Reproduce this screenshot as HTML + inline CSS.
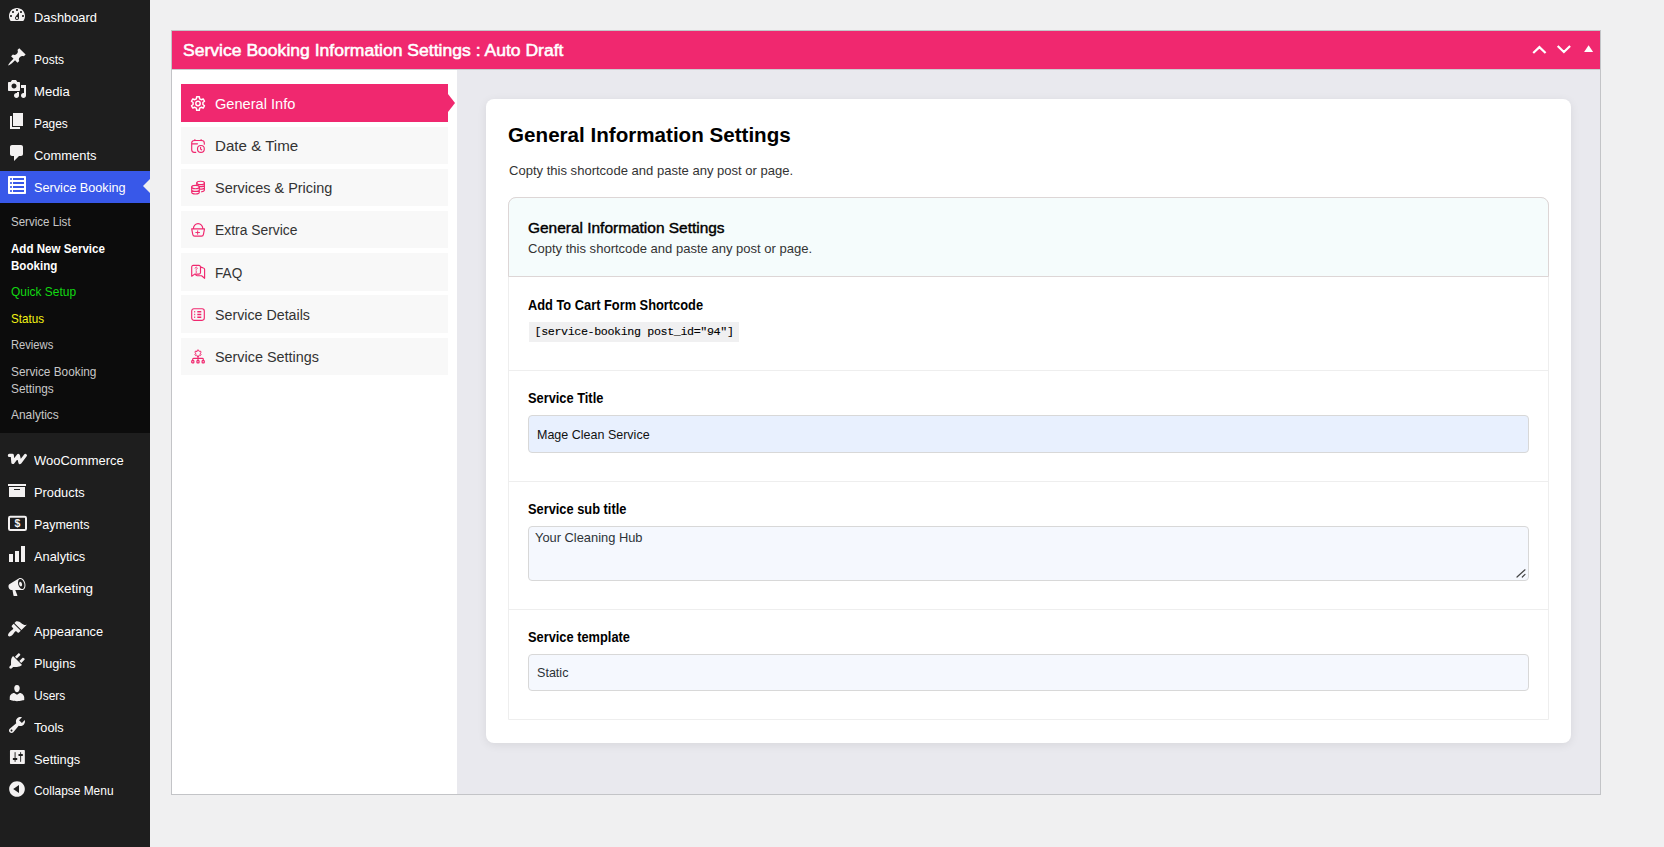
<!DOCTYPE html>
<html lang="en">
<head>
<meta charset="utf-8">
<title>Service Booking Information Settings</title>
<style>
*{box-sizing:border-box}
html,body{margin:0;padding:0}
body{width:1664px;height:847px;overflow:hidden;background:#f0f0f1;font-family:"Liberation Sans",sans-serif;color:#000;position:relative}
#menu{position:absolute;left:0;top:0;width:150px;height:847px;background:#1e1e1e}
.mi{position:absolute;left:0;width:150px;height:32px;color:#fff;font-size:13.1px;line-height:32px;white-space:nowrap}
.mi span{position:absolute;left:34px;top:0.6px;transform-origin:0 50%}
.mi svg{position:absolute;left:7px;top:4.3px;width:20px;height:20px;fill:#f3f1f1}
.mi svg.px{left:0;top:0;width:34px;height:32px}
.mi.cur{background:#3858e9}
.mi.cur svg{fill:#fff}
.mi.cur:after{content:"";position:absolute;right:0;top:8px;border:7.5px solid transparent;border-right-color:#f0f0f1;border-left-width:0}
#sub{position:absolute;left:0;top:203px;width:150px;height:230px;background:#0c0c0c}
#sub .si{margin-top:1px}
.si{transform-origin:0 50%;position:absolute;left:11.25px;font-size:12.2px;line-height:17px;color:#c8c8c8;white-space:nowrap}
.si.b{color:#fff;font-weight:bold}
#box{position:absolute;left:171px;top:30px;width:1430px;height:765px;border:1px solid #c3c4c7;background:#e9e9ee}
#hd{position:absolute;left:0;top:0;width:1428px;height:38px;background:#f0286f;box-shadow:0 1px 0 #c9cdd0;z-index:2}
#hd h2{transform:scaleX(1.039);transform-origin:0 50%;position:absolute;left:10.6px;top:.5px;margin:0;font-size:16.9px;line-height:38px;font-weight:normal;-webkit-text-stroke:.55px #fff;color:#fff;white-space:nowrap}
#hd svg{position:absolute;fill:#fff}
#left{position:absolute;left:0;top:38px;width:285px;height:725px;background:#fff}
.tab{position:absolute;left:9px;width:267px;height:37.5px;background:#f8f8f8;color:#333;font-size:15.5px;line-height:37.5px;white-space:nowrap}
.tab span{position:absolute;left:34px;top:.6px;transform-origin:0 50%}
.tab svg{position:absolute;left:9.9px;fill:none;stroke:#f0286f;stroke-width:1.15;stroke-linecap:round;stroke-linejoin:round;overflow:visible}
.tab.on{background:#f0286f;color:#fff}
.tab.on svg{stroke:#fff;stroke-width:1.45}
.tab.on:after{content:"";position:absolute;left:267px;top:9.5px;border:9.5px solid transparent;border-left:7px solid #f0286f;border-right-width:0}
#card{position:absolute;left:314px;top:68px;width:1085px;height:644px;background:#fff;border-radius:8px;box-shadow:0 2px 10px rgba(0,0,0,.08)}
#card h1{position:absolute;left:22.1px;top:20px;margin:0;font-size:20.6px;line-height:32px;font-weight:bold;white-space:nowrap}
.p{position:absolute;margin:0;font-size:13.1px;line-height:17px;color:#333;white-space:nowrap;transform:scaleX(.996);transform-origin:0 50%}
#sec{position:absolute;left:22px;top:98px;width:1041px;height:523px;border:1px solid #eee;border-radius:8px 8px 0 0}
#sh{position:absolute;left:-1px;top:-1px;width:1041px;height:80px;border:1px solid #ddd6d6;border-radius:8px 8px 0 0;background:#f5fcfc}
#sh h3{transform:scaleX(1.065);transform-origin:0 50%;position:absolute;left:18.6px;top:18.6px;margin:0;font-size:14.5px;line-height:22px;font-weight:normal;-webkit-text-stroke:.4px #000;color:#000;white-space:nowrap}
.row{position:absolute;left:0;width:1039px;border-top:1px solid #eee}
.lb{margin-top:-1px;transform:scaleX(.916);transform-origin:0 50%;position:absolute;left:18.7px;font-size:14px;line-height:18px;font-weight:bold;white-space:nowrap}
.in{position:absolute;left:19px;width:1001px;border:1px solid #d8d8d8;border-radius:4px;background:#f5f8fe;font-size:13.1px;color:#222;white-space:nowrap}
.in span{position:absolute;line-height:15px;transform-origin:0 50%}
code{position:absolute;left:20px;top:46px;width:210px;height:20px;background:#f0f0f1;font-family:"Liberation Mono",monospace;font-size:11.7px;letter-spacing:-.38px;line-height:21.2px;padding:0 5.5px;color:#000;-webkit-text-stroke:.1px #000;white-space:nowrap}
</style>
</head>
<body>
<div id="menu">
  <div class="mi" style="top:1px"><svg viewBox="0 0 20 20"><path d="M3.76 16h12.48c1.1-1.37 1.76-3.11 1.76-5 0-4.42-3.58-8-8-8s-8 3.58-8 8c0 1.89.66 3.63 1.76 5zM10 4c.55 0 1 .45 1 1s-.45 1-1 1-1-.45-1-1 .45-1 1-1zM6 6c.55 0 1 .45 1 1s-.45 1-1 1-1-.45-1-1 .45-1 1-1zm8 0c.55 0 1 .45 1 1s-.45 1-1 1-1-.45-1-1 .45-1 1-1zm-5.37 5.55L12 7v6c0 1.1-.9 2-2 2s-2-.9-2-2c0-.57.24-1.08.63-1.45zM4 10c.55 0 1 .45 1 1s-.45 1-1 1-1-.45-1-1 .45-1 1-1zm12 0c.55 0 1 .45 1 1s-.45 1-1 1-1-.45-1-1 .45-1 1-1zm-5 3c0-.55-.45-1-1-1s-1 .45-1 1 .45 1 1 1 1-.45 1-1z"/></svg><span style="transform:scaleX(0.983)">Dashboard</span></div>
  <div class="mi" style="top:43px"><svg viewBox="0 0 20 20"><path d="M10.44 3.02l1.82-1.82 6.36 6.35-1.83 1.82c-1.05-.68-2.48-.57-3.41.36l-.75.75c-.92.93-1.04 2.35-.35 3.41l-1.83 1.82-2.41-2.41-2.8 2.79c-.42.42-3.38 2.71-3.8 2.29s1.86-3.39 2.28-3.81l2.79-2.79L4.1 9.36l1.83-1.82c1.05.69 2.48.57 3.4-.36l.75-.75c.93-.92 1.05-2.35.36-3.41z"/></svg><span style="transform:scaleX(0.915)">Posts</span></div>
  <div class="mi" style="top:75px"><svg viewBox="0 0 20 20"><path d="M13 11V4c0-.55-.45-1-1-1h-1.67L9 1H5L3.67 3H2c-.55 0-1 .45-1 1v7c0 .55.45 1 1 1h10c.55 0 1-.45 1-1zM7 4.5c1.38 0 2.5 1.12 2.5 2.5S8.380 9.500 7 9.500 4.500 8.380 4.500 7 5.620 4.500 7 4.500zM14 6h5v10.500c0 1.380-1.120 2.500-2.500 2.500S14 17.880 14 16.500s1.120-2.500 2.500-2.500c.170 0 .340.020.500.050V9h-3V6zm-4 8.050V13h2v3.500c0 1.380-1.120 2.500-2.500 2.500S7 17.880 7 16.500 8.120 14 9.500 14c.17 0 .34.020.5.050z"/></svg><span style="transform:scaleX(1.0)">Media</span></div>
  <div class="mi" style="top:107px"><svg viewBox="0 0 20 20"><path d="M6 15V2h10v13H6zm-1 1h8v2H3V5h2v11z"/></svg><span style="transform:scaleX(0.91)">Pages</span></div>
  <div class="mi" style="top:139px"><svg viewBox="0 0 20 20"><path d="M5 2h9c1.100 0 2 .900 2 2v7c0 1.100-.900 2-2 2h-2l-5 5v-5H5c-1.100 0-2-.900-2-2V4c0-1.100.900-2 2-2z"/></svg><span style="transform:scaleX(0.987)">Comments</span></div>
  <div class="mi cur" style="top:171px"><svg viewBox="0 0 20 20"><path d="M2 19h16c.55 0 1-.45 1-1V2c0-.55-.45-1-1-1H2c-.55 0-1 .45-1 1v16c0 .55.45 1 1 1zM4 3c.55 0 1 .45 1 1s-.45 1-1 1-1-.45-1-1 .45-1 1-1zm13 0v2H6V3h11zM4 7c.55 0 1 .45 1 1s-.45 1-1 1-1-.45-1-1 .45-1 1-1zm13 0v2H6V7h11zM4 11c.55 0 1 .45 1 1s-.45 1-1 1-1-.45-1-1 .45-1 1-1zm13 0v2H6v-2h11zM4 15c.55 0 1 .45 1 1s-.45 1-1 1-1-.45-1-1 .45-1 1-1zm13 0v2H6v-2h11z"/></svg><span style="transform:scaleX(0.968)">Service Booking</span></div>
  <div id="sub">
    <div class="si" style="transform:scaleX(0.946);top:10px">Service List</div>
    <div class="si b" style="transform:scaleX(0.95);top:37px">Add New Service<br>Booking</div>
    <div class="si" style="transform:scaleX(0.98);top:80px;color:#12d812">Quick Setup</div>
    <div class="si" style="transform:scaleX(0.954);top:106.5px;color:#f2f214">Status</div>
    <div class="si" style="transform:scaleX(0.917);top:133px">Reviews</div>
    <div class="si" style="transform:scaleX(0.97);top:159.5px">Service Booking<br>Settings</div>
    <div class="si" style="transform:scaleX(0.98);top:203px">Analytics</div>
  </div>
  <div class="mi" style="top:444px"><svg class="px" viewBox="0 0 34 32"><path d="M9.4 11.4H12.3L12.9 18.5L18.3 11.5L20 18.5L25.4 11.4" fill="none" stroke="#f3f1f1" stroke-width="3.2" stroke-linecap="round" stroke-linejoin="round"/></svg><span style="transform:scaleX(0.99)">WooCommerce</span></div>
  <div class="mi" style="top:476px"><svg viewBox="0 0 20 20"><path d="M19 4v2H1V4h18zM2 7h16v10H2V7zm11 3V9H7v1h6z"/></svg><span style="transform:scaleX(0.98)">Products</span></div>
  <div class="mi" style="top:508px"><svg class="px" viewBox="0 0 34 32"><rect x="9" y="8.8" width="17" height="13.2" rx="1.3" fill="none" stroke="#f3f1f1" stroke-width="2"/><text x="17.4" y="19.2" text-anchor="middle" font-family="Liberation Sans,sans-serif" font-weight="bold" font-size="10.5" fill="#f3f1f1">$</text></svg><span style="transform:scaleX(0.952)">Payments</span></div>
  <div class="mi" style="top:540px"><svg viewBox="0 0 20 20"><path d="M18 18V2h-4v16h4zm-6 0V7H8v11h4zm-6 0v-8H2v8h4z"/></svg><span style="transform:scaleX(0.978)">Analytics</span></div>
  <div class="mi" style="top:572px"><svg viewBox="0 0 20 20" style="top:5.2px"><path d="M18.15 5.94c.46 1.62.38 3.22-.02 4.480-.42 1.280-1.260 2.180-2.300 2.480-.16.060-.26.060-.4.060-.06.020-.12.020-.18.020-.06.020-.14.020-.22.020h-6.800l2.220 5.500c.02.140-.06.260-.14.340-.08.100-.24.160-.34.160H6.950c-.1 0-.26-.06-.34-.16-.08-.08-.16-.2-.14-.34l-1-5.500H4.250l-.02-.02c-.5.060-1.080-.18-1.540-.62s-.88-1.080-1.060-1.880c-.24-.8-.2-1.560-.02-2.200.18-.62.580-1.080 1.060-1.300l.02-.02 9-5.400c.1-.06.180-.1.240-.16.060-.04.140-.08.240-.12.160-.08.280-.12.500-.18 1.040-.3 2.240.1 3.220.98s1.840 2.240 2.260 3.860zm-2.580 5.980h-.02c.4-.1.740-.34 1.040-.7.580-.7.860-1.760.86-3.040 0-.64-.1-1.300-.28-1.980-.34-1.360-1.020-2.500-1.780-3.240s-1.680-1.100-2.460-.88c-.82.220-1.400.96-1.700 2-.32 1.040-.28 2.360.06 3.720.38 1.360 1 2.500 1.800 3.240.78.740 1.620 1.100 2.480.88zm-2.540-7.080c.22-.04.420-.02.620.04.380.16.760.48 1.020 1s.42 1.200.42 1.780c0 .3-.04.560-.12.800-.18.480-.44.840-.86.940-.34.100-.8-.06-1.140-.4s-.64-.86-.78-1.500c-.18-.62-.12-1.240.02-1.720s.48-.84.820-.94z"/></svg><span style="transform:scaleX(1.028)">Marketing</span></div>
  <div class="mi" style="top:615px"><svg viewBox="0 0 20 20"><path d="M14.480 11.060L7.410 3.990l1.500-1.500c.5-.56 2.300-.47 3.510.32 1.210.8 1.430 1.280 2.910 2.100 1.180.64 2.450 1.260 4.450.85zm-.71.710L6.700 4.700 4.930 6.470c-.39.390-.39 1.020 0 1.410l1.060 1.060c.39.390.39 1.030 0 1.420-.6.600-1.430 1.110-2.210 1.690-.35.260-.7.530-1.010.84C1.430 14.230.400 16.080 1.400 17.070c.99 1 2.840-.03 4.180-1.360.31-.31.580-.66.850-1.020.57-.78 1.080-1.610 1.690-2.210.39-.39 1.020-.39 1.410 0l1.060 1.060c.39.390 1.020.39 1.410 0z"/></svg><span style="transform:scaleX(0.979)">Appearance</span></div>
  <div class="mi" style="top:647px"><svg viewBox="0 0 20 20"><path d="M13.110 4.360L9.870 7.600 8 5.730l3.240-3.240c.35-.34 1.050-.2 1.560.32.520.51.660 1.210.31 1.550zm-8 1.770l.91-1.120 9.010 9.010-1.190.84c-.71.710-2.630 1.160-3.820 1.160H6.140L4.900 17.260c-.59.590-1.540.59-2.120 0-.59-.58-.59-1.530 0-2.120l1.240-1.240v-3.880c0-1.130.4-3.190 1.090-3.890zm7.260 3.970l3.240-3.240c.34-.35 1.040-.21 1.550.31.520.51.660 1.210.31 1.550l-3.240 3.250z"/></svg><span style="transform:scaleX(0.967)">Plugins</span></div>
  <div class="mi" style="top:679px"><svg viewBox="0 0 20 20"><path d="M10 9.250c-2.270 0-2.730-3.440-2.730-3.440C7 4.020 7.820 2 9.970 2c2.160 0 2.980 2.020 2.710 3.810 0 0-.41 3.440-2.680 3.440zm0 2.570L12.720 10c2.390 0 4.520 2.330 4.520 4.530v2.490s-3.650 1.130-7.240 1.130c-3.650 0-7.240-1.130-7.240-1.130v-2.490c0-2.250 1.940-4.480 4.470-4.480z"/></svg><span style="transform:scaleX(0.914)">Users</span></div>
  <div class="mi" style="top:711px"><svg viewBox="0 0 20 20"><path d="M16.680 9.770c-1.340 1.340-3.300 1.670-4.950.99l-5.410 6.520c-.99.990-2.590.99-3.580 0s-.99-2.590 0-3.570l6.520-5.420c-.68-1.650-.35-3.610.99-4.950 1.280-1.280 3.120-1.620 4.720-1.060l-2.890 2.890 2.820 2.820 2.860-2.870c.53 1.580.18 3.390-1.080 4.650zM3.810 16.210c.4.390 1.040.39 1.430 0 .4-.4.4-1.040 0-1.430-.39-.4-1.030-.4-1.430 0-.39.390-.39 1.030 0 1.430z"/></svg><span style="transform:scaleX(0.972)">Tools</span></div>
  <div class="mi" style="top:743px"><svg viewBox="0 0 20 20"><path transform="translate(10.4 0) scale(.93 1) translate(-10 0)" d="M18 16V4c0-.55-.45-1-1-1H3c-.55 0-1 .45-1 1v12c0 .55.45 1 1 1h14c.55 0 1-.45 1-1zM8 11h1c.55 0 1 .45 1 1s-.45 1-1 1H8v1.500c0 .28-.22.500-.5.500s-.5-.22-.5-.5V13H6c-.55 0-1-.45-1-1s.45-1 1-1h1V5.500c0-.28.220-.5.5-.5s.5.220.5.500V11zm5-2h-1c-.55 0-1-.45-1-1s.45-1 1-1h1V5.500c0-.28.220-.5.5-.5s.5.220.5.500V7h1c.55 0 1 .45 1 1s-.45 1-1 1h-1v5.500c0 .28-.22.500-.5.500s-.5-.22-.5-.5V9z"/></svg><span style="transform:scaleX(0.978)">Settings</span></div>
  <div class="mi" style="top:774px"><svg viewBox="0 0 20 20" style="top:5.2px"><path d="M10 2.160c4.330 0 7.840 3.510 7.840 7.840s-3.510 7.840-7.840 7.840S2.160 14.330 2.160 10 5.670 2.160 10 2.160zm2 11.720V6.120L6.180 9.970z"/></svg><span style="transform:scaleX(0.978);font-size:12.2px">Collapse Menu</span></div>
</div>

<div id="box">
  <div id="hd">
    <h2>Service Booking Information Settings : Auto Draft</h2>
    <svg viewBox="1528 31 70 38" style="left:1356px;top:0;width:70px;height:38px"><path d="M1534 52.3L1539.4 47.1L1544.8 52.3M1558.5 46.8L1563.9 52L1569.3 46.8" fill="none" stroke="#fff" stroke-width="2.2" stroke-linecap="square"/><path d="M1584.1 51.9L1588.6 45.2L1593.1 51.9z"/></svg>
  </div>
  <div id="left">
    <div class="tab on" style="top:15.40px"><svg viewBox="0 0 14 15" width="14" height="15" style="top:11.500px"><path d="M5.370 2.770 L5.680 0.730 L8.320 0.730 L8.630 2.770 L10.280 3.730 L12.210 2.970 L13.520 5.250 L11.910 6.550 L11.910 8.450 L13.520 9.750 L12.210 12.030 L10.280 11.270 L8.630 12.230 L8.320 14.270 L5.680 14.270 L5.370 12.230 L3.720 11.270 L1.790 12.030 L0.480 9.750 L2.090 8.450 L2.090 6.550 L0.480 5.250 L1.790 2.970 L3.720 3.730Z"/><circle cx="7" cy="7.500" r="2.200"/></svg><span style="transform:scaleX(0.942)">General Info</span></div>
    <div class="tab" style="top:57.59px"><svg viewBox="0 0 14 14" width="14" height="14" style="top:12px"><path d="M4.800 13.300H3.200A2.500 2.500 0 0 1 .7 10.800V4A2.500 2.500 0 0 1 3.200 1.500h7.600A2.500 2.500 0 0 1 13.300 4v1.200M3.900.6v1M10.100.6v1M.9 4.800h5.600"/><circle cx="9.900" cy="9.900" r="3.400"/><path d="M9.600 8.300v1.800l1 .7"/></svg><span style="transform:scaleX(0.976)">Date &amp; Time</span></div>
    <div class="tab" style="top:99.78px"><svg viewBox="0 0 14 15" width="14" height="15" style="top:11.500px"><ellipse cx="9.600" cy="2.900" rx="3.800" ry="1.700"/><path d="M13.400 2.900v7.200c0 .8-1.200 1.500-2.900 1.700M5.800 2.900v2M8.400 6.500c2.600.5 5-.3 5-1.200M8.400 9c2.600.5 5-.3 5-1.200"/><ellipse cx="4.500" cy="7" rx="3.800" ry="1.700"/><path d="M.7 7v5.300c0 .95 1.700 1.700 3.800 1.700s3.800-.75 3.800-1.700V7M.7 9.650c0 .95 1.700 1.700 3.800 1.700s3.800-.75 3.800-1.700"/></svg><span style="transform:scaleX(0.933)">Services &amp; Pricing</span></div>
    <div class="tab" style="top:141.97px"><svg viewBox="0 0 14 15" width="14" height="15" style="top:11px"><path d="M.7 6.900h12.800l-1.050 5.500a2 2 0 0 1-2 1.700H3.750a2 2 0 0 1-2-1.700zM2.400 6.600A4.700 5 0 0 1 11.800 6.600"/><path d="M4.4 10.53h4.5M6.63 8.4v4.3" stroke-width=".95" stroke-linecap="butt"/></svg><span style="top:.1px;transform:scaleX(0.895)">Extra Service</span></div>
    <div class="tab" style="top:184.16px"><svg viewBox="0 0 14 14" width="14" height="14" style="top:12px"><path d="M2.2.4h5.800a1.500 1.500 0 0 1 1.500 1.500v5.700a1.500 1.500 0 0 1-1.500 1.500H3.700L.7 11.200V1.900A1.500 1.500 0 0 1 2.200.4zM10 2.100l2.400.9a1.500 1.500 0 0 1 1.200 1.500v8.800l-3-2.600H6.100a1.600 1.600 0 0 1-1.500-1.100"/><path d="M4.100 3.200a1.050 1.050 0 1 1 1.600.9l-.6.450v.7" stroke-width=".9"/><circle cx="5.100" cy="7" r=".25" stroke-width=".7"/></svg><span style="transform:scaleX(0.878)">FAQ</span></div>
    <div class="tab" style="top:226.35px"><svg viewBox="0 0 14 13" width="14" height="13" style="top:12.500px"><rect x=".7" y=".7" width="12.600" height="11.600" rx="2.200"/><path d="M6.300 3.700h4M6.300 6.500h4M6.300 9.300h4" stroke-width="1.500" stroke-linecap="butt"/><path d="M3.200 3.700h1M3.200 6.500h1M3.200 9.300h1" stroke-width="1.500" stroke-linecap="butt"/></svg><span style="transform:scaleX(0.919)">Service Details</span></div>
    <div class="tab" style="top:268.54px"><svg viewBox="0 0 14 15" width="14" height="15" style="top:11.4px"><path d="M6.14 2.17L6.26 1.08L7.74 1.08L7.86 2.17L8.42 2.49L9.41 2.05L10.16 3.34L9.28 3.98L9.28 4.62L10.16 5.26L9.41 6.55L8.42 6.11L7.86 6.43L7.74 7.52L6.26 7.52L6.14 6.43L5.58 6.11L4.59 6.55L3.84 5.26L4.72 4.62L4.72 3.98L3.84 3.34L4.59 2.05L5.58 2.49Z" stroke-width="1"/><path d="M7 7.4v4M1.7 11.4V10.2a.9.9 0 0 1 .9-.9h8.800a.9.9 0 0 1 .9.9v1.200"/><rect x=".7" y="11.600" width="2.2" height="2.200" rx=".6"/><rect x="5.9" y="11.6" width="2.200" height="2.2" rx=".6"/><rect x="11.1" y="11.6" width="2.2" height="2.200" rx=".6"/></svg><span style="transform:scaleX(0.927)">Service Settings</span></div>
  </div>
  <div id="card">
    <h1>General Information Settings</h1>
    <p class="p" style="left:22.5px;top:62.8px">Copty this shortcode and paste any post or page.</p>
    <div id="sec">
      <div id="sh">
        <h3>General Information Settings</h3>
        <p class="p" style="left:18.9px;top:42.2px">Copty this shortcode and paste any post or page.</p>
      </div>
      <div class="row" style="top:78px;height:94px;border-top:0">
        <div class="lb" style="top:21px">Add To Cart Form Shortcode</div>
        <code>[service-booking post_id="94"]</code>
      </div>
      <div class="row" style="top:172px;height:111px">
        <div class="lb" style="top:19px">Service Title</div>
        <div class="in" style="top:44px;height:37.500px;background:#e8f0fe;color:#111"><span style="left:8.1px;top:10.9px;transform:scaleX(.955)">Mage Clean Service</span></div>
      </div>
      <div class="row" style="top:283px;height:128px">
        <div class="lb" style="top:19px">Service sub title</div>
        <div class="in" style="top:44px;height:54.500px;color:#2c3338"><span style="left:5.7px;top:3px;transform:scaleX(.982)">Your Cleaning Hub</span>
          <svg viewBox="0 0 10 10" style="position:absolute;right:2.2px;bottom:1.2px;width:10px;height:10px"><path d="M1 9L9 1.800M6.300 9L9 6.300" stroke="#444" stroke-width="1.200" stroke-linecap="round" fill="none"/></svg>
        </div>
      </div>
      <div class="row" style="top:411px;height:110px">
        <div class="lb" style="top:19px">Service template</div>
        <div class="in" style="top:44px;height:36.5px;color:#2c3338"><span style="left:7.6px;top:10px;transform:scaleX(.96)">Static</span></div>
      </div>
    </div>
  </div>
</div>
</body>
</html>
